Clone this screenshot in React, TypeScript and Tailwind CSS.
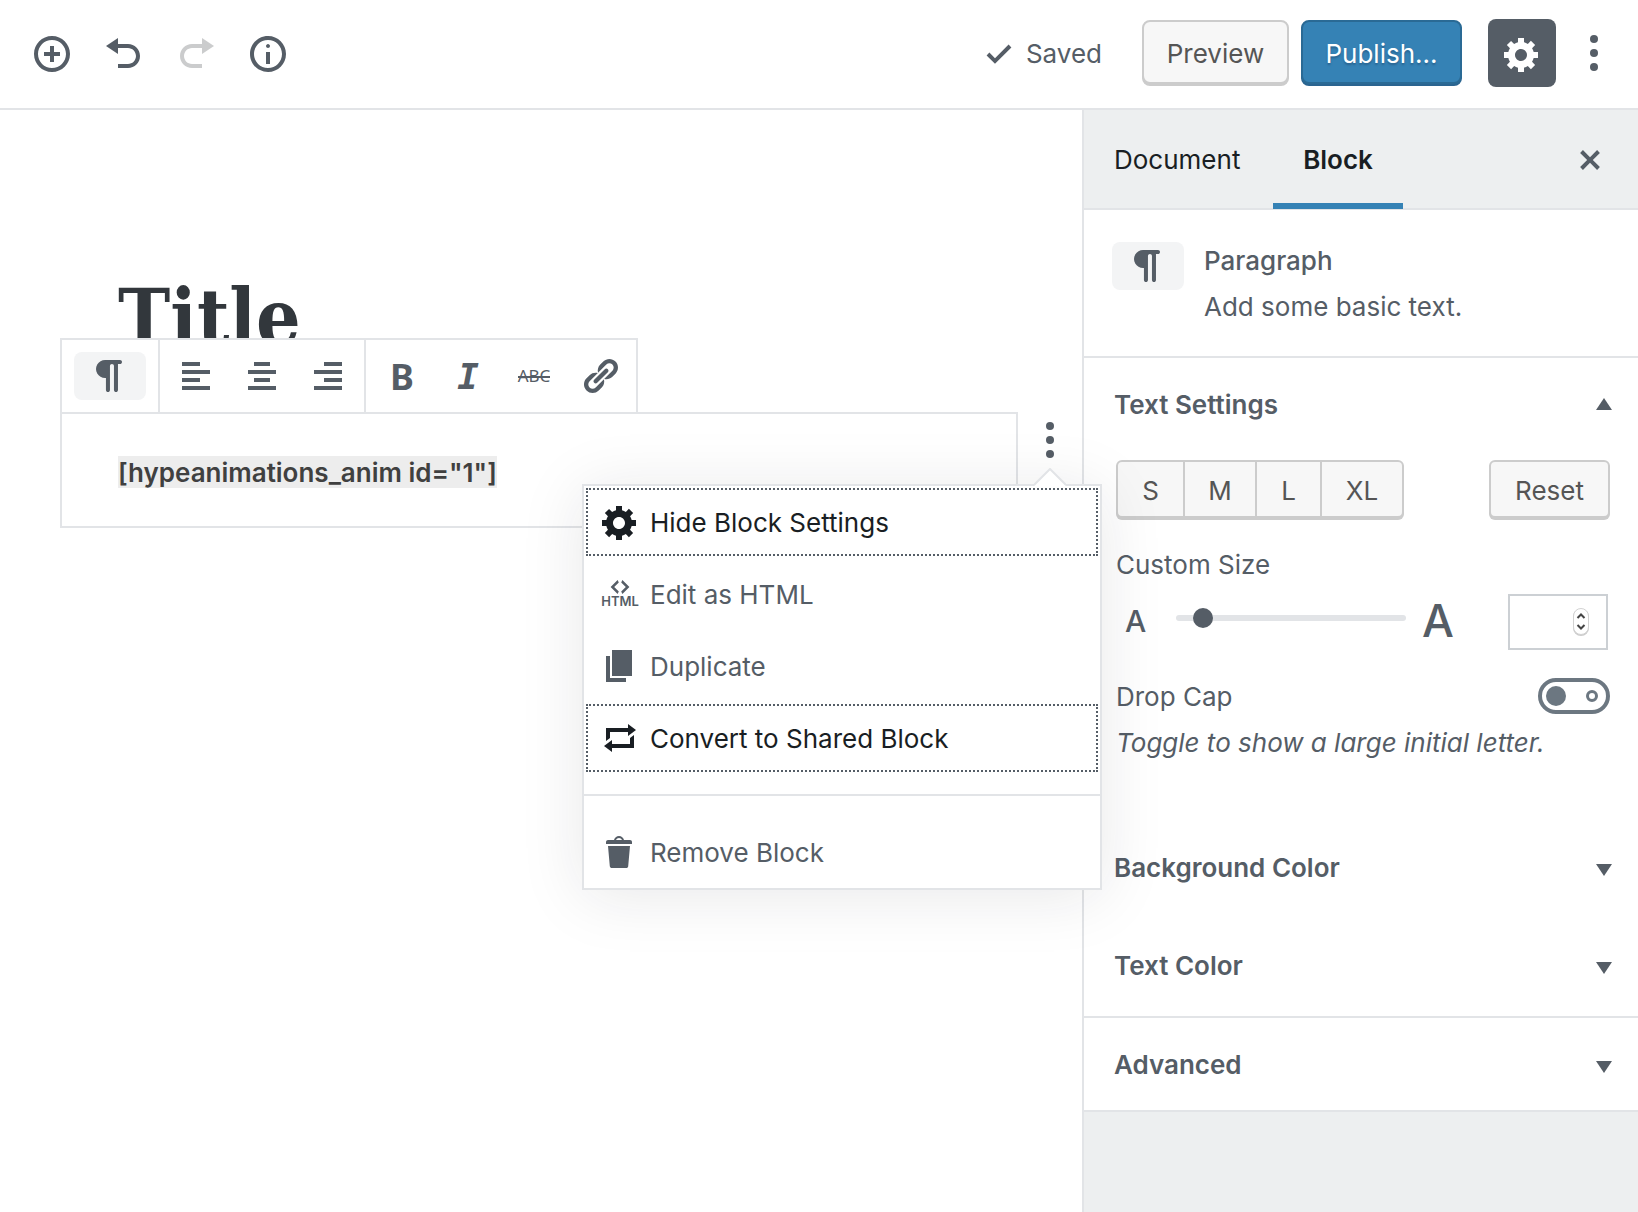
import { useState } from "react"
import type { ReactNode } from "react"
import clsx from "clsx"

const icons = {
  insert:
    "M10 1c-5 0-9 4-9 9s4 9 9 9 9-4 9-9-4-9-9-9zm0 16c-3.9 0-7-3.1-7-7s3.1-7 7-7 7 3.1 7 7-3.1 7-7 7zm1-11H9v3H6v2h3v3h2v-3h3V9h-3V6z",
  undo: "M12 5H7V2L1 6l6 4V7h5c2.2 0 4 1.8 4 4s-1.8 4-4 4H7v2h5c3.3 0 6-2.7 6-6s-2.7-6-6-6z",
  redo: "M8 5h5V2l6 4-6 4V7H8c-2.2 0-4 1.8-4 4s1.8 4 4 4h5v2H8c-3.3 0-6-2.7-6-6s2.7-6 6-6z",
  info: "M9 15h2V9H9v6zm1-10c-.5 0-1 .5-1 1s.5 1 1 1 1-.5 1-1-.5-1-1-1zm0-4c-5 0-9 4-9 9s4 9 9 9 9-4 9-9-4-9-9-9zm0 16c-3.9 0-7-3.1-7-7s3.1-7 7-7 7 3.1 7 7-3.1 7-7 7z",
  saved: "M15.3 5.3l-6.8 6.8-2.8-2.8-1.4 1.4 4.2 4.2 8.2-8.2z",
  gear: "M18 12h-2.18c-.17.7-.44 1.35-.81 1.93l1.54 1.54-2.1 2.1-1.54-1.54c-.58.36-1.23.63-1.91.79V19H8v-2.18c-.68-.16-1.33-.43-1.91-.79l-1.54 1.54-2.12-2.12 1.54-1.54c-.36-.58-.63-1.23-.79-1.91H1V9.03h2.17c.16-.7.44-1.35.8-1.94L2.43 5.55l2.1-2.1 1.54 1.54c.58-.37 1.24-.64 1.93-.81V2h3v2.18c.68.16 1.33.43 1.91.79l1.54-1.54 2.12 2.12-1.54 1.54c.36.59.64 1.24.8 1.94H18V12zm-8.5 1.5c1.66 0 3-1.34 3-3s-1.34-3-3-3-3 1.34-3 3 1.34 3 3 3z",
  paragraph:
    "M15 2H7.54c-.83 0-1.59.2-2.28.6-.7.41-1.25.96-1.65 1.65C3.2 4.94 3 5.7 3 6.52s.2 1.58.61 2.27c.4.69.95 1.24 1.65 1.64.69.41 1.45.61 2.28.61h.43V17c0 .27.1.51.29.71.2.19.44.29.71.29.28 0 .51-.1.71-.29.2-.2.3-.44.3-.71V5c0-.27.09-.51.29-.71.2-.19.44-.29.71-.29s.51.1.71.29c.19.2.29.44.29.71v12c0 .27.1.51.3.71.2.19.43.29.71.29.27 0 .51-.1.71-.29.19-.2.29-.44.29-.71V4H15c.27 0 .5-.1.7-.3.2-.19.3-.43.3-.7s-.1-.51-.3-.71C15.5 2.1 15.27 2 15 2z",
  alignLeft: "M12 5V3H3v2h9zm5 4V7H3v2h14zm-5 4v-2H3v2h9zm5 4v-2H3v2h14z",
  alignCenter: "M14 5V3H6v2h8zm3 4V7H3v2h14zm-3 4v-2H6v2h8zm3 4v-2H3v2h14z",
  alignRight: "M17 5V3H8v2h9zm0 4V7H3v2h14zm0 4v-2H8v2h9zm0 4v-2H3v2h14z",
  link: "M17.74 2.76c1.68 1.69 1.68 4.41 0 6.1l-1.53 1.52c-1.12 1.12-2.7 1.47-4.14 1.09l2.62-2.61.76-.77.76-.76c.84-.84.84-2.2 0-3.04-.84-.85-2.2-.85-3.04 0l-.77.76-3.38 3.38c-.37-1.44-.02-3.02 1.1-4.14l1.52-1.53c1.69-1.68 4.42-1.68 6.1 0zM8.59 13.43l5.34-5.34c.42-.42.42-1.1 0-1.52-.44-.43-1.13-.39-1.53 0l-5.33 5.34c-.42.42-.42 1.1 0 1.52.44.43 1.13.39 1.52 0zm-.76 2.29l4.14-4.15c.38 1.44.03 3.02-1.09 4.14l-1.52 1.53c-1.69 1.68-4.41 1.68-6.1 0-1.68-1.68-1.68-4.42 0-6.1l1.53-1.52c1.12-1.12 2.7-1.47 4.14-1.1l-4.14 4.15c-.85.84-.85 2.2 0 3.05.84.84 2.2.84 3.04 0z",
  duplicate: "M6 15V2h10v13H6zm-1 1h8v2H3V5h2v11z",
  repeat: "M5 7v3l-2 1.5V5h11V3l4 3.01L14 9V7H5zm10 6v-3l2-1.5V15H6v2l-4-3.01L6 11v2h9z",
  trash:
    "M12 4h3c.6 0 1 .4 1 1v1H3V5c0-.6.5-1 1-1h3c.2-1.1 1.3-2 2.5-2s2.3.9 2.5 2zM8 4h3c-.2-.6-.9-1-1.5-1S8.2 3.4 8 4zM4 7h11l-.9 10.1c0 .5-.5.9-1 .9H5.9c-.5 0-.9-.4-1-.9L4 7z",
  close:
    "M14.95 6.46L11.41 10l3.54 3.54-1.41 1.41L10 11.42l-3.53 3.53-1.42-1.42L8.58 10 5.05 6.47l1.42-1.42L10 8.58l3.54-3.53z",
}

function Icon({ name }: { name: keyof typeof icons }) {
  return (
    <svg viewBox="0 0 20 20" className="size-10 shrink-0 fill-current" aria-hidden="true">
      <path d={icons[name]} />
    </svg>
  )
}

function Dots() {
  return (
    <svg viewBox="0 0 20 20" className="size-10 fill-current" aria-hidden="true">
      <circle cx="10" cy="3" r="2" />
      <circle cx="10" cy="10" r="2" />
      <circle cx="10" cy="17" r="2" />
    </svg>
  )
}

function HtmlIcon() {
  return (
    <svg viewBox="0 0 20 20" className="size-10 shrink-0 overflow-visible fill-current" aria-hidden="true">
      <path d="M9.4 4.2L7.1 6.5l2.3 2.3-.6 1.2-3.5-3.5L8.8 3l.6 1.2zM10.6 8.8l2.3-2.3-2.3-2.3.6-1.2 3.5 3.5-3.5 3.5-.6-1.2z" />
      <text x="10" y="16" textAnchor="middle" fontSize="6.500" fontWeight="600">
        HTML
      </text>
    </svg>
  )
}

function Triangle({ up = false }: { up?: boolean }) {
  return (
    <svg viewBox="0 0 16 12" className={clsx("h-3 w-4 fill-current", !up && "mt-1.5")} aria-hidden="true">
      <path d={up ? "M8 0l8 12H0z" : "M0 0h16L8 12z"} />
    </svg>
  )
}

function ToolButton({ label, children }: { label: string; children: ReactNode }) {
  return (
    <button type="button" aria-label={label} className="flex h-[72px] w-[66px] items-center justify-center">
      {children}
    </button>
  )
}

function MenuItem({ icon, active = false, children }: { icon: ReactNode; active?: boolean; children: ReactNode }) {
  return (
    <button
      type="button"
      role="menuitem"
      className={clsx(
        "m-0.5 flex h-[68px] items-center gap-2.5 border-2 border-dotted px-3 text-left",
        active ? "border-[#555d66] text-[#191e23]" : "border-transparent",
      )}
    >
      {icon}
      <span className="pt-0.5">{children}</span>
    </button>
  )
}

function PanelTitle({ up = false, tall = false, children }: { up?: boolean; tall?: boolean; children: ReactNode }) {
  return (
    <h2>
      <button
        type="button"
        aria-expanded={up}
        className={clsx(
          "flex w-full items-center justify-between pr-[26px] pl-[30px] font-semibold",
          tall ? "h-[98px]" : "h-[92px]",
        )}
      >
        <span className="pt-0.5">{children}</span>
        <Triangle up={up} />
      </button>
    </h2>
  )
}

const sizes = [
  { label: "S", width: "w-[65px]" },
  { label: "M", width: "w-[72px]" },
  { label: "L", width: "w-[65px]" },
  { label: "XL", width: "w-[82px]" },
]

export default function App() {
  const [size, setSize] = useState(15)
  const [dropCap, setDropCap] = useState(false)

  return (
    <div className="flex min-h-screen flex-col bg-white font-['Inter',sans-serif] text-[26px] leading-9 text-[#555d66]">
      <header className="flex h-[110px] items-center justify-between border-b-2 border-[#e2e4e7] pr-[18px] pl-4">
        <div className="flex">
          <button type="button" aria-label="Add block" className="flex w-[72px] justify-center">
            <Icon name="insert" />
          </button>
          <button type="button" aria-label="Undo" className="flex w-[72px] justify-center">
            <Icon name="undo" />
          </button>
          <button type="button" aria-label="Redo" disabled className="flex w-[72px] justify-center text-[#cbcccd]">
            <Icon name="redo" />
          </button>
          <button type="button" aria-label="Content structure" className="flex w-[72px] justify-center">
            <Icon name="info" />
          </button>
        </div>
        <div className="flex items-center pb-0.5">
          <span className="mt-0.5 mr-10 flex items-center gap-2">
            <Icon name="saved" />
            Saved
          </span>
          <button
            type="button"
            className="mr-3 mb-0.5 h-16 w-[147px] rounded-lg border-2 border-[#ccc] bg-[#f7f7f7] pt-1 text-[#555] shadow-[0_2px_0_#ccc]"
          >
            Preview
          </button>
          <button
            type="button"
            className="mr-[26px] mb-0.5 h-16 w-[161px] rounded-lg border-2 border-[#2a6a95] bg-[#3582b5] pt-1 text-white shadow-[0_2px_0_#2a6490] [text-shadow:0_2px_2px_#2a6490]"
          >
            Publish...
          </button>
          <button
            type="button"
            aria-label="Settings"
            className="mr-3 flex size-[68px] items-center justify-center rounded-lg bg-[#555d66] pt-0.5 text-white"
          >
            <Icon name="gear" />
          </button>
          <button type="button" aria-label="More" className="flex w-[52px] justify-center">
            <Dots />
          </button>
        </div>
      </header>

      <div className="flex flex-1">
        <main className="min-w-0 flex-1 pt-[156px] pl-[60px]">
          <h1 className="h-[72px] pl-[58px] font-['DejaVu_Serif_Condensed','DejaVu_Serif',serif] text-[78px] leading-[104px] font-bold text-[#32373c]">
            Title
          </h1>
          <div className="relative flex w-fit border-2 border-b-0 border-[#e2e4e7] bg-white" role="toolbar" aria-label="Block tools">
            <div className="flex items-center px-3">
              <button
                type="button"
                aria-label="Change block type"
                className="flex h-12 w-[72px] items-center justify-center rounded-lg bg-[#f3f4f5]"
              >
                <Icon name="paragraph" />
              </button>
            </div>
            <div className="flex border-l-2 border-[#e2e4e7] px-[3px]">
              <ToolButton label="Align left">
                <Icon name="alignLeft" />
              </ToolButton>
              <ToolButton label="Align center">
                <Icon name="alignCenter" />
              </ToolButton>
              <ToolButton label="Align right">
                <Icon name="alignRight" />
              </ToolButton>
            </div>
            <div className="flex border-l-2 border-[#e2e4e7] px-[3px] font-['Noto_Sans',sans-serif]">
              <ToolButton label="Bold">
                <span className="pt-0.5 text-4xl font-bold">B</span>
              </ToolButton>
              <ToolButton label="Italic">
                <span className="pt-0.5 font-['DejaVu_Sans_Mono',monospace] text-4xl font-bold italic">I</span>
              </ToolButton>
              <ToolButton label="Strikethrough">
                <span className="relative text-[17px]">
                  ABC
                  <span className="absolute inset-x-0 top-1/2 h-0.5 bg-current" />
                </span>
              </ToolButton>
              <ToolButton label="Link">
                <Icon name="link" />
              </ToolButton>
            </div>
          </div>

          <div className="flex">
            <div className="h-[116px] min-w-0 flex-1 border-2 border-[#e2e4e7] pt-[42px] pl-14">
              <p className="w-fit bg-[#ededed] pt-0.5 leading-[30px] font-semibold text-[#404040]">
                [hypeanimations_anim id="1"]
              </p>
            </div>
            <div className="relative flex w-16 shrink-0 flex-col items-center pt-2">
              <button type="button" aria-label="More options">
                <Dots />
              </button>
              <div
                role="menu"
                className="absolute top-[72px] -right-5 z-20 flex w-[520px] flex-col border-2 border-[#e2e4e7] bg-white shadow-[0_6px_60px_rgba(25,30,35,0.1)]"
              >
                <svg viewBox="0 0 32 18" className="absolute -top-[18px] right-[34px] h-[18px] w-8" aria-hidden="true">
                  <path d="M0 18L16 2l16 16z" className="fill-white" />
                  <path d="M0 17L16 1l16 16" className="fill-none stroke-[#e2e4e7] stroke-2" />
                </svg>
                <MenuItem icon={<Icon name="gear" />} active>
                  Hide Block Settings
                </MenuItem>
                <MenuItem icon={<HtmlIcon />}>Edit as HTML</MenuItem>
                <MenuItem icon={<Icon name="duplicate" />}>Duplicate</MenuItem>
                <MenuItem icon={<Icon name="repeat" />} active>
                  Convert to Shared Block
                </MenuItem>
                <div className="mt-5 flex flex-col border-t-2 border-[#e2e4e7] pt-5">
                  <MenuItem icon={<Icon name="trash" />}>Remove Block</MenuItem>
                </div>
              </div>
            </div>
          </div>
        </main>

        <aside className="w-[556px] shrink-0 border-l-2 border-[#e2e4e7] bg-[#edeff0]">
          <div className="flex h-[100px] border-b-2 border-[#e2e4e7] text-[#191e23]">
            <button type="button" className="w-[189px] pt-0.5 pl-[30px] text-left">
              Document
            </button>
            <button type="button" className="-mb-px w-[130px] border-b-6 border-[#3582b5] pt-1.5 font-semibold">
              Block
            </button>
            <button type="button" aria-label="Close settings" className="mr-7 ml-auto pt-0.5 text-[#555d66]">
              <Icon name="close" />
            </button>
          </div>

          <div className="bg-white">
            <div className="flex h-[148px] gap-5 border-b-2 border-[#e2e4e7] px-7 pt-8">
              <span className="flex h-12 w-[72px] items-center justify-center rounded-lg bg-[#f3f4f5]">
                <Icon name="paragraph" />
              </span>
              <div className="flex flex-col gap-2.5 pt-px">
                <h2 className="font-medium">Paragraph</h2>
                <p>Add some basic text.</p>
              </div>
            </div>

            <PanelTitle up>Text Settings</PanelTitle>
            <div className="flex flex-col pr-7 pl-8">
              <div className="flex justify-between pt-2.5 text-[#555]">
                <div className="flex rounded-md border-2 border-[#ccc] bg-[#f7f7f7] shadow-[0_2px_0_#ccc]">
                  {sizes.map(({ label, width }, i) => (
                    <button
                      key={label}
                      type="button"
                      className={clsx("h-[54px] pt-1", width, i > 0 && "border-l-2 border-[#ccc]")}
                    >
                      {label}
                    </button>
                  ))}
                </div>
                <button
                  type="button"
                  className="w-[121px] rounded-md border-2 border-[#ccc] bg-[#f7f7f7] pt-1 shadow-[0_2px_0_#ccc]"
                >
                  Reset
                </button>
              </div>
              <label htmlFor="custom-size" className="mt-[29px]">
                Custom Size
              </label>
              <div className="mt-[11px] flex h-14 items-center">
                <span className="w-[60px] pb-0.5 pl-[9px] text-[30px] font-medium">A</span>
                <input
                  id="custom-size"
                  type="range"
                  min={10}
                  max={70}
                  value={size}
                  onChange={(e) => setSize(Number(e.target.value))}
                  className="mb-2 h-1.5 w-[230px] appearance-none rounded-full bg-[#e2e4e7] [&::-webkit-slider-thumb]:size-5 [&::-webkit-slider-thumb]:appearance-none [&::-webkit-slider-thumb]:rounded-full [&::-webkit-slider-thumb]:bg-[#555d66]"
                />
                <span className="pb-0.5 pl-4 text-[45px] font-medium">A</span>
                <span className="relative mr-0.5 ml-auto">
                  <input
                    type="number"
                    aria-label="Custom size in pixels"
                    className="block h-14 w-[100px] appearance-none border-2 border-[#ccd0d4] bg-white pl-3 [&::-webkit-inner-spin-button]:appearance-none"
                  />
                  <svg viewBox="0 0 18 30" className="absolute top-[13px] right-[18px] h-[30px] w-[18px]" aria-hidden="true">
                    <rect x="1" y="2" width="16" height="27" rx="8" className="fill-[#ccc]" />
                    <rect x="1.5" y="1.5" width="15" height="26" rx="7.5" className="fill-white stroke-[#d2d2d2]" />
                    <path d="M5.5 11L9 7.5l3.5 3.5M5.5 18L9 21.500l3.500-3.500" className="fill-none stroke-[#444] stroke-2" />
                  </svg>
                </span>
              </div>
              <div className="mt-7 flex h-9 items-center justify-between">
                <label htmlFor="drop-cap" className="pt-0.5">
                  Drop Cap
                </label>
                <span className="relative h-9 w-[72px]">
                  <input
                    id="drop-cap"
                    type="checkbox"
                    checked={dropCap}
                    onChange={(e) => setDropCap(e.target.checked)}
                    className="block h-9 w-[72px] appearance-none rounded-full border-4 border-[#6c7781] bg-white"
                  />
                  <svg viewBox="0 0 72 36" className="pointer-events-none absolute inset-0" aria-hidden="true">
                    <circle cx={dropCap ? 54 : 18} cy="18" r="10" className="fill-[#6c7781]" />
                    <circle cx={dropCap ? 18 : 54} cy="18" r="4.500" className="fill-none stroke-[#6c7781] stroke-3" />
                  </svg>
                </span>
              </div>
              <p className="mt-[11px] italic">Toggle to show a large initial letter.</p>
            </div>

            <div className="mt-[57px] border-b-2 border-[#e2e4e7] pb-0.5">
              <PanelTitle tall>Background Color</PanelTitle>
              <PanelTitle tall>Text Color</PanelTitle>
            </div>
            <div className="border-b-2 border-[#e2e4e7]">
              <PanelTitle>Advanced</PanelTitle>
            </div>
          </div>
        </aside>
      </div>
    </div>
  )
}
